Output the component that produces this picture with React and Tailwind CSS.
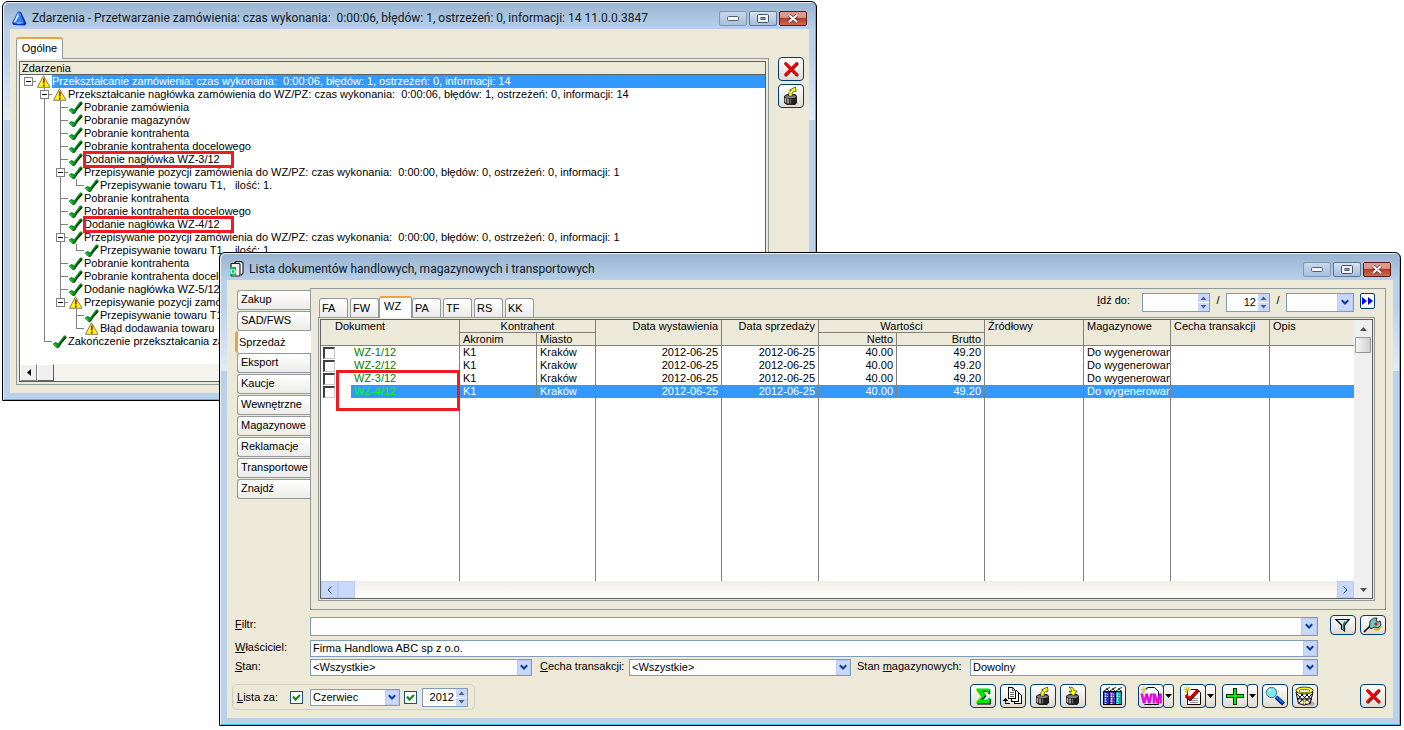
import React from 'react';
import clsx from 'clsx';

const TREE = [
  { guides: 'r', icon: 'warn', text: 'Przekształcanie zamówienia: czas wykonania:  0:00:06, błędów: 1, ostrzeżeń: 0, informacji: 14', selected: true },
  { guides: ' b', icon: 'warn', text: 'Przekształcanie nagłówka zamówienia do WZ/PZ: czas wykonania:  0:00:06, błędów: 1, ostrzeżeń: 0, informacji: 14' },
  { guides: ' |t', icon: 'ok', text: 'Pobranie zamówienia' },
  { guides: ' |t', icon: 'ok', text: 'Pobranie magazynów' },
  { guides: ' |t', icon: 'ok', text: 'Pobranie kontrahenta' },
  { guides: ' |t', icon: 'ok', text: 'Pobranie kontrahenta docelowego' },
  { guides: ' |t', icon: 'ok', text: 'Dodanie nagłówka WZ-3/12', marked: true },
  { guides: ' |b', icon: 'ok', text: 'Przepisywanie pozycji zamówienia do WZ/PZ: czas wykonania:  0:00:00, błędów: 0, ostrzeżeń: 0, informacji: 1' },
  { guides: ' ||l', icon: 'ok', text: 'Przepisywanie towaru T1,   ilość: 1.' },
  { guides: ' |t', icon: 'ok', text: 'Pobranie kontrahenta' },
  { guides: ' |t', icon: 'ok', text: 'Pobranie kontrahenta docelowego' },
  { guides: ' |t', icon: 'ok', text: 'Dodanie nagłówka WZ-4/12', marked: true },
  { guides: ' |b', icon: 'ok', text: 'Przepisywanie pozycji zamówienia do WZ/PZ: czas wykonania:  0:00:00, błędów: 0, ostrzeżeń: 0, informacji: 1' },
  { guides: ' ||l', icon: 'ok', text: 'Przepisywanie towaru T1,   ilość: 1.' },
  { guides: ' |t', icon: 'ok', text: 'Pobranie kontrahenta' },
  { guides: ' |t', icon: 'ok', text: 'Pobranie kontrahenta docelowego' },
  { guides: ' |t', icon: 'ok', text: 'Dodanie nagłówka WZ-5/12' },
  { guides: ' |e', icon: 'warn', text: 'Przepisywanie pozycji zamówienia' },
  { guides: ' | t', icon: 'ok', text: 'Przepisywanie towaru T1' },
  { guides: ' | l', icon: 'warn', text: 'Błąd dodawania towaru' },
  { guides: ' l', icon: 'ok', text: 'Zakończenie przekształcania zamówienia' },
];

const DOCS = ['WZ-1/12', 'WZ-2/12', 'WZ-3/12', 'WZ-4/12'];

const SIDE_TABS = ['Zakup', 'SAD/FWS', 'Sprzedaż', 'Eksport', 'Kaucje', 'Wewnętrzne', 'Magazynowe', 'Reklamacje', 'Transportowe', 'Znajdź'];

const TOP_TABS = ['FA', 'FW', 'WZ', 'PA', 'TF', 'RS', 'KK'];

// line segments of one 16x13 tree cell
const GUIDE_PATHS = {
  '|': 'M8.5 0V13',
  t: 'M8.5 0V13M8 6.5H16',
  l: 'M8.5 0V7M8 6.5H16',
  b: 'M8.5 0V13M8 6.5H16',
  e: 'M8.5 0V7M8 6.5H16',
  r: 'M8 6.5H16',
};

const Guide = ({ kind }) => (
  <svg width="16" height="13" viewBox="0 0 16 13" className="shrink-0" aria-hidden="true" shapeRendering="crispEdges">
    {GUIDE_PATHS[kind] && <path d={GUIDE_PATHS[kind]} stroke="#808080" fill="none" />}
    {'ber'.includes(kind) && (
      <>
        <rect x="4.5" y="2.5" width="8" height="8" fill="#fff" stroke="#808080" />
        <path d="M6 6.5H11" stroke="#000" />
      </>
    )}
  </svg>
);

const WarnIcon = () => (
  <svg width="16" height="13" viewBox="0 0 16 13" className="shrink-0" aria-hidden="true">
    <path d="M7.5 0.7 L14 12.3 H1.5 Z" fill="#ffff00" stroke="#808060" strokeLinejoin="round" />
    <path d="M7.8 3.5V8.5M7.8 9.6V11.4" stroke="#b01800" strokeWidth="1.8" />
  </svg>
);

const OkIcon = () => (
  <svg width="16" height="13" viewBox="0 0 16 13" className="shrink-0" aria-hidden="true">
    <path d="M1.5 9.5 L4 7.5 L6.5 9 L12.5 1 L14.5 1.5 V3 L9.5 8.5 L7 12.5 L5 13 Z" fill="#003800" />
    <path d="M0.5 9 L3.5 7 L6 8.5 L12 0.5 L14 0.5 L8.5 7.5 L6 12 L4.5 12.5 Z" fill="#009820" />
    <path d="M2 9 L4.5 11" stroke="#40e040" />
  </svg>
);

const RedX = () => (
  <svg width="18" height="18" viewBox="0 0 18 18" aria-hidden="true">
    <path d="M4 4L15 15M15 4L4 15" stroke="#000" strokeWidth="3" strokeLinecap="round" />
    <path d="M3.5 3.5L14.5 14.5M14.5 3.5L3.5 14.5" stroke="#ff0000" strokeWidth="2.6" strokeLinecap="round" />
  </svg>
);

const DrumIcon = ({ down }) => (
  <svg width="20" height="20" viewBox="0 0 20 20" aria-hidden="true">
    <path d="M3 10 L6 8 H14 L16 10 V17 L14 19 H6 L3 17 Z" fill="#202020" />
    <path d="M4.5 12V16.5M7 12.5V17.5" stroke="#b0b0b0" strokeWidth="1.6" />
    <path d="M9.5 12.5V17.5" stroke="#686868" strokeWidth="1.4" />
    <ellipse cx="9.5" cy="10.5" rx="5.5" ry="1.6" fill="#808080" />
    {down ? (
      <path d="M6 1 L9.5 1.5 L11 4 L12.5 5 H14 L10.5 10 L6 5.5 H8.5 L8 3.5 Z" fill="#ffff00" stroke="#303000" strokeWidth="0.7" />
    ) : (
      <path d="M7.5 10 L8 6.5 L10 4.5 H9 L8.5 4 L14.5 1 L15 5.5 H12.5 L11 7 L11.5 10 Z" fill="#ffff00" stroke="#303000" strokeWidth="0.7" />
    )}
  </svg>
);

const SigmaIcon = () => (
  <svg width="20" height="20" viewBox="0 0 20 20" aria-hidden="true" fontFamily="Liberation Serif, serif" fontSize="22" fontWeight="bold">
    <text x="4" y="18" fill="#000" stroke="#000">Σ</text>
    <text x="3" y="17" fill="#00e800" stroke="#00e800">Σ</text>
  </svg>
);

const CopyIcon = () => (
  <svg width="20" height="20" viewBox="0 0 20 20" aria-hidden="true" stroke="#000" shapeRendering="crispEdges">
    <path d="M11.5 7.5H16.5L18.5 9.5V17.5H11.5Z" fill="#fff" />
    <path d="M8.5 4.5H13.5L15.5 6.5V15.5H8.5Z" fill="#fff" />
    <path d="M5.5 1.5H9.5L12.5 4.5V12.5H5.5Z" fill="#fff" />
    <path d="M9.5 1.5V4.5H12.5M7 6.5H11M7 8.5H11M7 10.5H11" fill="none" stroke="#606060" />
    <path d="M2.5 12V17M0 14.5H5M1 13.5H4M2 17.5H7" fill="none" />
  </svg>
);

const BindersIcon = () => (
  <svg width="20" height="20" viewBox="0 0 20 20" aria-hidden="true">
    <g stroke="#000">
      <rect x="0.5" y="5.5" width="6" height="13" fill="#2030b0" />
      <rect x="6.5" y="5.5" width="6" height="13" fill="#6030a8" />
      <rect x="12.5" y="5.5" width="6" height="13" fill="#00a8a8" />
      <path d="M1 5L4 3L6 5M7 5L10 3L12 5M13 5L16 3L18 5M3 3L7 1.5M9 3L13 1.5M15 3L19 1.5" fill="none" strokeWidth="0.8" />
    </g>
    <path d="M2.5 7V18M8.5 7V18M14.5 7V18" stroke="#fff" strokeWidth="1.6" strokeDasharray="1.5 1" />
    <path d="M4.5 8V12M10.5 8V12M16.5 8V12" stroke="#60e8ff" strokeWidth="1.2" strokeDasharray="1 1" />
  </svg>
);

const Sparkle = () => (
  <path d="M0.5 3.5H8M4 0V7.5M1.5 1L7 6.5M7 1L1.5 6.5" stroke="#d8c800" strokeWidth="1" fill="none" />
);

const WmIcon = () => (
  <svg width="22" height="20" viewBox="0 0 22 20" aria-hidden="true">
    <path d="M5 3.5L8 1.5H14.5L18.5 5.5V18.5H4.5" fill="#fff" stroke="#000" />
    <Sparkle />
    <text x="1" y="17" fill="#e800e0" stroke="#e800e0" strokeWidth="0.8" fontFamily="Liberation Sans Narrow, Liberation Sans, sans-serif" fontSize="12" fontWeight="bold">WM</text>
  </svg>
);

const TaskIcon = () => (
  <svg width="20" height="20" viewBox="0 0 20 20" aria-hidden="true">
    <path d="M4.5 3.5H14.5L17.5 6.5V18.5H4.5Z" fill="#fff" stroke="#000" />
    <path d="M7 12.5H15M7 14.5H15M7 16.5H15" stroke="#909090" />
    <Sparkle />
    <path d="M3 10L7 13L15 4.5" fill="none" stroke="#000" strokeWidth="3.4" />
    <path d="M2.5 9L7 12.5L15 4" fill="none" stroke="#e80000" strokeWidth="2.4" />
  </svg>
);

const PlusIcon = () => (
  <svg width="20" height="20" viewBox="0 0 20 20" aria-hidden="true" shapeRendering="crispEdges">
    <path d="M8.5 2.5H11.5V8.5H18.5V11.5H11.5V18.5H8.5V11.5H1.5V8.5H8.5Z" fill="#00f000" stroke="#003000" />
  </svg>
);

const LensIcon = () => (
  <svg width="20" height="20" viewBox="0 0 20 20" aria-hidden="true">
    <path d="M11 11L18.5 18" stroke="#001060" strokeWidth="4" />
    <path d="M11 10.5L18 17" stroke="#0070f0" strokeWidth="2.2" />
    <circle cx="6.5" cy="6.5" r="5.2" fill="#78e8f0" stroke="#507080" />
    <path d="M4 5L6 3.5" stroke="#fff" strokeWidth="1.5" />
  </svg>
);

const BinIcon = () => (
  <svg width="22" height="20" viewBox="0 0 22 20" aria-hidden="true">
    <path d="M17 14L21 18L19 19.5H12Z" fill="#a8a8a8" />
    <path d="M2 6L4.5 17.5Q10 20.5 16 17.5L19 6Z" fill="#fff" stroke="#000" />
    <path d="M3 8L13 19M7 8L16.5 17M12 8L17 13M18 8L8 19M14 8L5 17M9 8L4 13M3 13H18" stroke="#000" strokeWidth="1" />
    <ellipse cx="10.5" cy="4.5" rx="8.5" ry="3.5" fill="#ffff30" stroke="#000" strokeWidth="0.8" />
    <ellipse cx="10.5" cy="5" rx="5.5" ry="1.6" fill="#fff" stroke="#808000" />
    <path d="M8 17.5L10.5 14.5L13 17.5Z" fill="#e8e000" />
  </svg>
);

const FunnelIcon = () => (
  <svg width="18" height="16" viewBox="0 0 18 16" aria-hidden="true">
    <path d="M2 2.5H15L10.5 8V14L7.5 12V8Z" fill="#d0e8e8" stroke="#000" strokeWidth="1.2" />
    <path d="M11 4.5L9.5 8V13" stroke="#008080" strokeWidth="1.6" fill="none" />
  </svg>
);

const WrenchIcon = () => (
  <svg width="20" height="16" viewBox="0 0 20 16" aria-hidden="true">
    <path d="M1 15L8 8" stroke="#000" strokeWidth="1.6" />
    <path d="M6.5 10L7 4L11 1H14L13 4L15 5L17 4L18 8L15 11L11 10L8 12Z" fill="#70c8c8" stroke="#000" strokeWidth="0.8" />
    <path d="M11 12L15 13L18.5 9" stroke="#c8b800" strokeWidth="1.6" fill="none" />
    <circle cx="13" cy="7" r="1.6" fill="#e01010" />
  </svg>
);

const AppIcon = () => (
  <svg width="15" height="15" viewBox="0 0 15 15" aria-hidden="true">
    <path d="M6 0.5L9 1L14.5 12.5L13 14.5L1.5 14L0 12Z" fill="#1030b0" />
    <path d="M6.2 1L8 1.5L12 12L1 11.8Z" fill="#3080f0" />
    <path d="M6 2L7 5L3.5 11L1.5 11.5Z" fill="#d0e8ff" />
    <path d="M2 12L8 10.5L12 12.2L7 13Z" fill="#70b0ff" />
  </svg>
);

const DocIcon = () => (
  <svg width="15" height="16" viewBox="0 0 15 16" aria-hidden="true">
    <path d="M5 2.5L7 0.7H12.5L14 2V12L12 14.5" fill="#fff" stroke="#222" strokeWidth="1.2" />
    <rect x="2" y="2.5" width="9" height="12.5" rx="1" fill="#f0f0f0" stroke="#222" strokeWidth="1.2" />
    <rect x="1" y="6" width="6" height="8" fill="#10b050" />
    <text x="1" y="13" fontSize="8" fontWeight="bold" fontFamily="Liberation Sans, sans-serif" fill="#fff">D</text>
  </svg>
);

const Chevron = () => (
  <svg width="8" height="7" viewBox="0 0 8 7" aria-hidden="true">
    <path d="M0.8 1.3L4 4.5L7.2 1.3" stroke="#0c3c98" strokeWidth="2" fill="none" />
  </svg>
);

const Combo = ({ id, value = '', label, className, tall }) => (
  <div className={clsx('relative flex border border-[#7f9db9] bg-white', className)}>
    <select
      id={id}
      aria-label={label}
      defaultValue={value}
      className="h-full w-full min-w-0 appearance-none bg-transparent pl-[2px] leading-[15px] outline-none"
    >
      <option>{value}</option>
    </select>
    <span
      className={clsx(
        'pointer-events-none absolute inset-y-0 right-0 flex items-center justify-center border border-[#bccaf4] bg-[#c8d8fb]',
        tall ? 'w-[16px]' : 'w-[14px]'
      )}
    >
      <Chevron />
    </span>
  </div>
);

const Spinner = ({ id, value = '', label, className }) => (
  <div className={clsx('flex h-[19px] border border-[#7f9db9] bg-white', className)}>
    <input id={id} aria-label={label} type="text" defaultValue={value} className="w-full min-w-0 bg-transparent pr-[2px] text-right outline-none" />
    <div className="flex w-[11px] shrink-0 flex-col gap-px">
      <button type="button" aria-label="Więcej" className="flex flex-1 items-center justify-center bg-[#c8d8fb]">
        <svg width="7" height="4" viewBox="0 0 7 4"><path d="M0.5 4L3.5 0.5L6.5 4Z" fill="#4d6185" /></svg>
      </button>
      <button type="button" aria-label="Mniej" className="flex flex-1 items-center justify-center bg-[#c8d8fb]">
        <svg width="7" height="4" viewBox="0 0 7 4"><path d="M0.5 0L3.5 3.5L6.5 0Z" fill="#4d6185" /></svg>
      </button>
    </div>
  </div>
);

const CheckBox = ({ label }) => (
  <span className="relative flex h-[13px] w-[13px]">
    <input type="checkbox" defaultChecked aria-label={label} className="h-full w-full appearance-none border border-[#1c5180] bg-white" />
    <svg width="13" height="13" viewBox="0 0 13 13" className="pointer-events-none absolute inset-0" aria-hidden="true">
      <path d="M3 5.5L5.5 8.5L10 4" stroke="#109010" strokeWidth="2.2" fill="none" />
    </svg>
  </span>
);

const ToolButton = ({ label, children, short }) => (
  <button
    type="button"
    aria-label={label}
    className={clsx(
      'flex w-[26px] shrink-0 items-center justify-center overflow-hidden rounded-[4px] border border-[#003c74] bg-gradient-to-b from-white to-[#dfdbd2]',
      short ? 'h-[20px]' : 'h-[24px]'
    )}
  >
    {children}
  </button>
);

const SplitButton = ({ label, children }) => (
  <div className="flex">
    <ToolButton label={label}>{children}</ToolButton>
    <button
      type="button"
      aria-label={label + ' - menu'}
      className="-ml-px flex h-[24px] w-[11px] items-center justify-center rounded-[3px] border border-[#003c74] bg-gradient-to-b from-white to-[#dfdbd2]"
    >
      <svg width="7" height="4" viewBox="0 0 7 4"><path d="M0 0H7L3.5 4Z" fill="#000" /></svg>
    </button>
  </div>
);

const Window = ({ title, icon, className, children }) => (
  <section
    className={clsx(
      'absolute flex flex-col rounded-t-[6px] border border-black px-[7px] pb-[7px]',
      'bg-[linear-gradient(to_bottom,#99b4d1_0,#b9d1ea_28px,#b9d1ea_50px,#e0ebf8_118px,#b9d1ea_118px)]',
      'shadow-[inset_1px_1px_0_#e8f2fb,inset_-1px_-1px_0_#37c4e6]',
      className
    )}
  >
    <header className="flex h-[27px] items-center pt-[5px]">
      <span className="ml-[2px] flex w-[20px]">{icon}</span>
      <h1 className="flex-1 overflow-hidden font-[Roboto,'Noto_Sans',sans-serif] text-[12px] leading-[16px] whitespace-pre text-[#101820]">{title}</h1>
      <div className="mr-[2px] flex gap-[2px]">
        <button type="button" aria-label="Minimalizuj" className="flex h-[15px] w-[28px] items-center justify-center rounded-[2px] border border-[#8396ad] bg-gradient-to-b from-[#c6d8ec] to-[#a8c0dc]">
          <svg width="12" height="5" viewBox="0 0 12 5"><rect x="0.5" y="0.5" width="11" height="4" rx="1" fill="#f4f4f4" stroke="#55606c" /></svg>
        </button>
        <button type="button" aria-label="Maksymalizuj" className="flex h-[15px] w-[28px] items-center justify-center rounded-[2px] border border-[#5f7694] bg-gradient-to-b from-[#d4e2f1] to-[#a4bddb]">
          <svg width="12" height="9" viewBox="0 0 12 9"><rect x="0.5" y="0.5" width="11" height="8" rx="1" fill="#f4f4f4" stroke="#454f66" /><rect x="4" y="3.5" width="4" height="2" fill="#8ba6c8" stroke="#454f66" /></svg>
        </button>
        <button type="button" aria-label="Zamknij okno" className="flex h-[15px] w-[28px] items-center justify-center rounded-[2px] border border-[#5b1c1c] bg-gradient-to-b from-[#dd9a8c] from-40% via-[#b83a26] via-50% to-[#cf6a50]">
          <svg width="12" height="9" viewBox="0 0 12 9"><path d="M2 1L10 8M10 1L2 8" stroke="#4a3038" strokeWidth="3.6" /><path d="M2 1L10 8M10 1L2 8" stroke="#fff" strokeWidth="2.2" /></svg>
        </button>
      </div>
    </header>
    {children}
  </section>
);

const TreeRow = ({ row }) => (
  <li className="flex h-[13px] items-center whitespace-pre">
    {row.guides.split('').map((kind, i) => (
      <Guide key={i} kind={kind} />
    ))}
    {row.icon === 'warn' ? <WarnIcon /> : <OkIcon />}
    <span className={clsx('relative leading-[13px]', row.selected && 'flex-1 bg-[#3399ff] text-white')}>
      {row.text}
      {row.marked && <span className="absolute -top-[2px] -left-px h-[17px] w-[151px] border-[3px] border-[#ed1c24]" />}
    </span>
  </li>
);

const EventsWindow = () => (
  <Window
    title={'Zdarzenia - Przetwarzanie zamówienia: czas wykonania:  0:00:06, błędów: 1, ostrzeżeń: 0, informacji: 14 11.0.0.3847'}
    icon={<AppIcon />}
    className="top-px left-[2px] right-[587px]"
  >
    <div className="flex gap-[9px] bg-[#ece9d8] py-[8px] pr-[5px] pl-[6px]">
      <div className="flex min-w-0 flex-1 flex-col">
        <div role="tablist">
          <button type="button" role="tab" aria-selected="true" className="relative -mb-px h-[22px] w-[47px] rounded-t-[3px] border border-t-2 border-b-0 border-[#919b9c] border-t-[#f0a040] bg-white pb-[2px]">
            Ogólne
          </button>
        </div>
        <div className="border border-[#919b9c] p-[2px]">
          <div className="border border-[#606060] bg-white">
            <div className="h-[13px] overflow-hidden border-b border-[#606060] bg-[#ece9d8] pl-[2px]">Zdarzenia</div>
            <ul className="h-[289px] overflow-hidden">
              {TREE.map((row, i) => (
                <TreeRow key={i} row={row} />
              ))}
            </ul>
            <div className="flex h-[17px] bg-[#f4f3ee]">
              <button type="button" aria-label="W lewo" className="flex w-[17px] items-center justify-center border border-white border-r-[#808080] border-b-[#808080] bg-[#f0f0f0]">
                <svg width="4" height="7" viewBox="0 0 4 7"><path d="M4 0V7L0 3.5Z" fill="#000" /></svg>
              </button>
              <div className="w-[17px] border border-white border-r-[#606060] border-b-[#606060] bg-[#f0f0f0]" />
            </div>
          </div>
        </div>
      </div>
      <div className="flex flex-col gap-[3px] pt-[20px]">
        <ToolButton label="Zamknij"><RedX /></ToolButton>
        <ToolButton label="Eksportuj"><DrumIcon /></ToolButton>
      </div>
    </div>
  </Window>
);

const Th = ({ align = 'text-left', className, ...props }) => (
  <th className={clsx('overflow-hidden border-r border-b border-[#808080] px-[3px] align-top font-normal whitespace-nowrap', align, className)} {...props} />
);

const Td = ({ className, last, ...props }) => (
  <td className={clsx('overflow-hidden border-[#808080] px-[3px] whitespace-nowrap', !last && 'border-r', className)} {...props} />
);

const DocsTable = () => (
  <table className="w-full table-fixed border-separate border-spacing-0">
    <colgroup>
      <col className="w-[30px]" />
      <col className="w-[109px]" />
      <col className="w-[77px]" />
      <col className="w-[59px]" />
      <col className="w-[126px]" />
      <col className="w-[97px]" />
      <col className="w-[78px]" />
      <col className="w-[88px]" />
      <col className="w-[99px]" />
      <col className="w-[87px]" />
      <col className="w-[99px]" />
      <col />
    </colgroup>
    <thead className="bg-[#ece9d8] leading-[12px]">
      <tr className="h-[13px]">
        <Th colSpan={2} rowSpan={2} className="pl-[14px]">Dokument</Th>
        <Th colSpan={2} align="text-center">Kontrahent</Th>
        <Th rowSpan={2} align="text-right">Data wystawienia</Th>
        <Th rowSpan={2} align="text-right">Data sprzedaży</Th>
        <Th colSpan={2} align="text-center">Wartości</Th>
        <Th rowSpan={2}>Źródłowy</Th>
        <Th rowSpan={2}>Magazynowe</Th>
        <Th rowSpan={2}>Cecha transakcji</Th>
        <th rowSpan={2} className="border-b border-[#808080] px-[3px] text-left align-top font-normal">Opis</th>
      </tr>
      <tr className="h-[13px]">
        <Th>Akronim</Th>
        <Th>Miasto</Th>
        <Th align="text-right">Netto</Th>
        <Th align="text-right">Brutto</Th>
      </tr>
    </thead>
    <tbody>
      {DOCS.map((doc, i) => {
        const selected = i === DOCS.length - 1;
        const fill = selected && 'bg-[#3399ff]';
        return (
          <tr key={doc} className={clsx('h-[13px]', selected && 'text-white')}>
            <td className="pl-[2px]">
              <input
                type="checkbox"
                aria-label={'Zaznacz ' + doc}
                className="block h-[12px] w-[12px] appearance-none border border-t-2 border-l-2 border-[#c8c8c8] border-t-[#404040] border-l-[#404040] bg-white"
              />
            </td>
            <Td className={selected ? 'bg-[#3399ff] text-[#00ff00]' : 'text-[#008000]'}>{doc}</Td>
            <Td className={fill}>K1</Td>
            <Td className={fill}>Kraków</Td>
            <Td className={clsx('text-right', fill)}>2012-06-25</Td>
            <Td className={clsx('text-right', fill)}>2012-06-25</Td>
            <Td className={clsx('text-right', fill)}>40.00</Td>
            <Td className={clsx('text-right', fill)}>49.20</Td>
            <Td className={fill} />
            <Td className={fill}>Do wygenerowan</Td>
            <Td className={fill} />
            <Td last className={fill} />
          </tr>
        );
      })}
      <tr className="h-[183px]">
        <Td colSpan={2} />
        <Td colSpan={2} />
        <Td />
        <Td />
        <Td colSpan={2} />
        <Td />
        <Td />
        <Td />
        <Td last />
      </tr>
    </tbody>
  </table>
);

const SideTabs = () => (
  <div role="tablist" aria-orientation="vertical" className="flex w-[83px] shrink-0 flex-col pt-[2px] pl-[8px]">
    {SIDE_TABS.map((tab) => {
      const active = tab === 'Sprzedaż';
      return (
        <button
          key={tab}
          type="button"
          role="tab"
          aria-selected={active}
          className={clsx(
            'overflow-hidden rounded-l-[3px] text-left whitespace-nowrap',
            active
              ? 'relative -mt-px -mr-px h-[22px] border-l-[3px] border-[#f0a040] bg-white pl-px'
              : 'mb-px ml-[2px] h-[20px] border border-r-0 border-[#919b9c] bg-gradient-to-b from-white to-[#ecebe6] pb-[2px] pl-[3px]'
          )}
        >
          {tab}
        </button>
      );
    })}
  </div>
);

const TopTabs = () => (
  <div role="tablist" className="flex items-end gap-[2px]">
    {TOP_TABS.map((tab) => {
      const active = tab === 'WZ';
      return (
        <button
          key={tab}
          type="button"
          role="tab"
          aria-selected={active}
          className={clsx(
            'rounded-t-[3px] border border-b-0 border-[#919b9c] text-left',
            active
              ? 'relative -mx-[2px] -mb-px h-[22px] w-[33px] border-t-2 border-t-[#f0a040] bg-white pb-[4px] pl-[4px]'
              : 'h-[19px] w-[29px] bg-gradient-to-b from-white to-[#ecebe6] pl-[2px]'
          )}
        >
          {tab}
        </button>
      );
    })}
  </div>
);

const GoTo = () => (
  <div className="flex pt-[4px] pr-[10px]">
    <label htmlFor="goto-number" className="mr-[12px] leading-[15px]"><u>I</u>dź do:</label>
    <Spinner id="goto-number" className="w-[68px]" />
    <span className="w-[16px] text-center leading-[15px]">/</span>
    <Spinner label="Miesiąc" value="12" className="w-[44px]" />
    <span className="w-[16px] text-center leading-[15px]">/</span>
    <Combo label="Rok" tall className="h-[19px] w-[68px]" />
    <button type="button" aria-label="Idź" className="ml-[6px] flex h-[16px] w-[15px] items-center justify-center rounded-[2px] border border-[#003c74] bg-white">
      <svg width="11" height="8" viewBox="0 0 11 8"><path d="M0 0L5 4L0 8ZM6 0L11 4L6 8Z" fill="#0000ff" /></svg>
    </button>
  </div>
);

const DocsPanel = () => (
  <div className="min-w-0 flex-1 border border-[#919b9c] pb-[8px]">
    <div className="flex h-[28px] items-stretch justify-between pl-[8px]">
      <TopTabs />
      <GoTo />
    </div>
    <div className="mr-[10px] ml-[7px] border border-[#919b9c] p-px">
      <div className="relative flex border border-[#606060] bg-white">
        <div className="min-w-0 flex-1">
          <DocsTable />
          <div className="flex h-[17px] justify-between bg-gradient-to-b from-[#f0eee8] to-white">
            <div className="flex">
              <button type="button" aria-label="Przewiń w lewo" className="flex w-[17px] items-center justify-center border border-[#bccaf4] bg-[#c8d8fb]">
                <svg width="5" height="8" viewBox="0 0 5 8"><path d="M4.5 0.5L1 4L4.5 7.5" stroke="#0c3c98" fill="none" /></svg>
              </button>
              <div className="w-[17px] border border-[#bccaf4] bg-[#c8d8fb]" />
            </div>
            <button type="button" aria-label="Przewiń w prawo" className="flex w-[17px] items-center justify-center border border-[#bccaf4] bg-[#c8d8fb]">
              <svg width="5" height="8" viewBox="0 0 5 8"><path d="M0.5 0.5L4 4L0.5 7.5" stroke="#0c3c98" fill="none" /></svg>
            </button>
          </div>
        </div>
        <div className="flex w-[18px] shrink-0 flex-col bg-[#efefef]">
          <button type="button" aria-label="Przewiń w górę" className="flex h-[17px] items-center justify-center">
            <svg width="7" height="4" viewBox="0 0 7 4"><path d="M0 4L3.5 0L7 4Z" fill="#505050" /></svg>
          </button>
          <div className="mx-px h-[16px] rounded-[1px] border border-[#979797] bg-gradient-to-r from-[#f5f5f5] to-[#cfcfcf]" />
          <button type="button" aria-label="Przewiń w dół" className="mt-auto flex h-[17px] items-center justify-center">
            <svg width="7" height="4" viewBox="0 0 7 4"><path d="M0 0L3.5 4L7 0Z" fill="#505050" /></svg>
          </button>
        </div>
        {/* highlight around the newly added documents */}
        <span className="pointer-events-none absolute top-[50px] left-[15px] h-[41px] w-[124px] border-[3px] border-[#ed1c24]" />
      </div>
    </div>
  </div>
);

const Filters = () => (
  <div className="mt-[5px] flex pr-[7px] pl-[8px]">
    <div className="flex min-w-0 flex-1 flex-col pt-[2px]">
      <div className="flex">
        <label htmlFor="filter" className="w-[75px] leading-[15px]"><u>F</u>iltr:</label>
        <Combo id="filter" tall className="h-[19px] flex-1" />
      </div>
      <div className="mt-[4px] flex">
        <label htmlFor="owner" className="w-[75px] leading-[15px]"><u>W</u>łaściciel:</label>
        <Combo id="owner" value="Firma Handlowa ABC sp z o.o." className="h-[17px] flex-1" />
      </div>
      <div className="mt-[2px] flex">
        <label htmlFor="state" className="w-[75px] leading-[15px]"><u>S</u>tan:</label>
        <Combo id="state" value="<Wszystkie>" className="h-[17px] w-[222px]" />
        <label htmlFor="feature" className="w-[97px] pl-[8px] leading-[15px]"><u>C</u>echa transakcji:</label>
        <Combo id="feature" value="<Wszystkie>" className="h-[17px] w-[222px]" />
        <label htmlFor="stock" className="w-[119px] pl-[6px] leading-[15px]">Stan <u>m</u>agazynowych:</label>
        <Combo id="stock" value="Dowolny" className="h-[17px] flex-1" />
      </div>
    </div>
    <div className="ml-[12px] flex items-start gap-[4px]">
      <ToolButton label="Filtruj" short><FunnelIcon /></ToolButton>
      <ToolButton label="Konstruktor filtra" short><WrenchIcon /></ToolButton>
    </div>
  </div>
);

const BottomBar = () => (
  <div className="mt-[8px] flex items-start justify-between pr-[7px] pb-[8px] pl-[5px]">
    <div className="flex h-[26px] items-center rounded-[5px] border border-[#d0d0bf] pr-[6px] pl-[4px]">
      <label htmlFor="month" className="w-[53px]"><u>L</u>ista za:</label>
      <CheckBox label="Filtruj po miesiącu" />
      <Combo id="month" value="Czerwiec" className="ml-[7px] h-[17px] w-[90px]" />
      <span className="ml-[4px] flex"><CheckBox label="Filtruj po roku" /></span>
      <Spinner label="Rok listy" value="2012" className="ml-[5px] w-[46px]" />
    </div>
    <div className="flex">
      <div className="flex gap-[4px]">
        <ToolButton label="Podsumowanie"><SigmaIcon /></ToolButton>
        <ToolButton label="Kopiuj"><CopyIcon /></ToolButton>
        <ToolButton label="Eksport"><DrumIcon /></ToolButton>
        <ToolButton label="Import"><DrumIcon down /></ToolButton>
      </div>
      <div className="ml-[14px]">
        <ToolButton label="Rejestry"><BindersIcon /></ToolButton>
      </div>
      <div className="ml-[12px] flex gap-[6px]">
        <SplitButton label="Dokument magazynowy"><WmIcon /></SplitButton>
        <SplitButton label="Zatwierdź"><TaskIcon /></SplitButton>
        <SplitButton label="Dodaj"><PlusIcon /></SplitButton>
      </div>
      <div className="ml-[4px] flex gap-[4px]">
        <ToolButton label="Podgląd"><LensIcon /></ToolButton>
        <ToolButton label="Usuń"><BinIcon /></ToolButton>
      </div>
      <div className="ml-[42px]">
        <ToolButton label="Zamknij"><RedX /></ToolButton>
      </div>
    </div>
  </div>
);

const DocumentsWindow = () => (
  <Window
    title="Lista dokumentów handlowych, magazynowych i transportowych"
    icon={<DocIcon />}
    className="top-[252px] left-[219px] right-[3px]"
  >
    <div className="bg-[#ece9d8] pt-[8px]">
      <div className="flex pr-[7px]">
        <SideTabs />
        <DocsPanel />
      </div>
      <Filters />
      <BottomBar />
    </div>
  </Window>
);

export default function App() {
  return (
    <main className="relative min-h-screen overflow-hidden bg-white font-['Liberation_Sans',Arial,sans-serif] text-[11px] leading-[13px] text-black">
      <EventsWindow />
      <DocumentsWindow />
    </main>
  );
}
